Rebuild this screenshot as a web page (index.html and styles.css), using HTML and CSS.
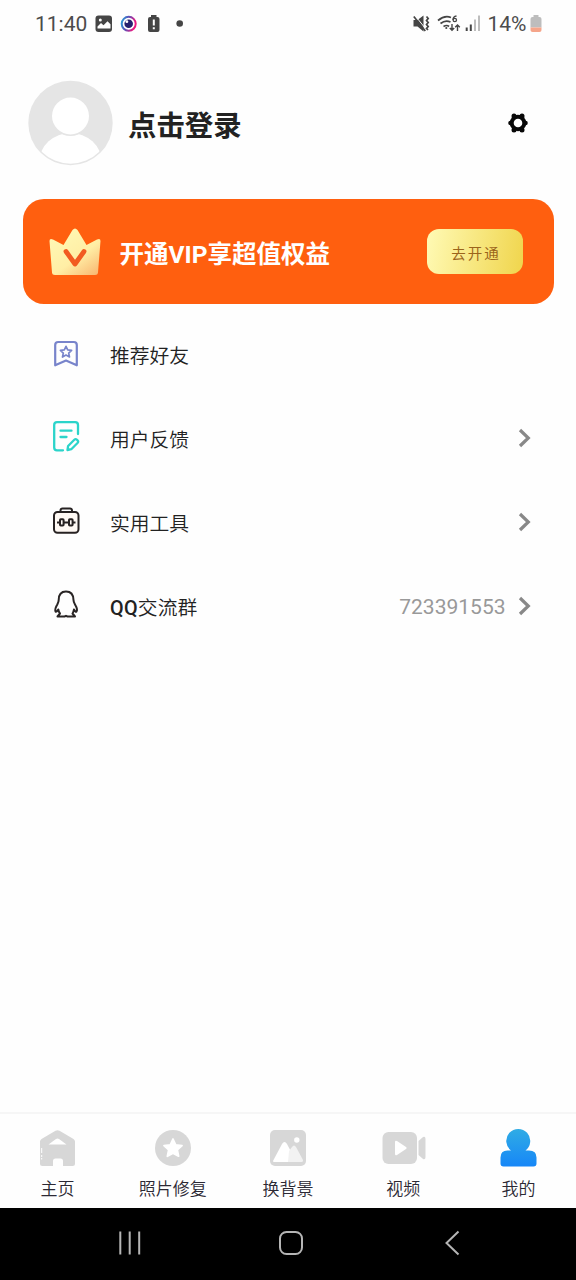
FILE: index.html
```html
<!DOCTYPE html>
<html lang="zh-CN">
<head>
<meta charset="utf-8">
<title>我的</title>
<link rel="stylesheet" href="styles.css">
</head>
<body>
<div class="screen">
  <header class="status">
    <span class="clock">11:40</span>
    <svg class="status-left" width="96" height="24" viewBox="92 12 96 24">
      <rect x="95.5" y="15.500" width="16.500" height="16.500" rx="3" fill="#454545"/>
      <path d="M97.500 28.500v-2l3.500-3.500 2.500 2.300 4-4 3 3v4.200z" fill="#fff"/>
      <circle cx="100.300" cy="20" r="1.500" fill="#fff"/>
      <defs><linearGradient id="eye" x1="0" y1="0" x2="1" y2="0.300"><stop offset="0" stop-color="#24a5dc"/><stop offset=".45" stop-color="#5951b8"/><stop offset="1" stop-color="#ed1880"/></linearGradient></defs>
      <circle cx="128.700" cy="23.800" r="7" fill="#fff" stroke="url(#eye)" stroke-width="2"/>
      <circle cx="128.700" cy="23.800" r="4.300" fill="#26206f"/>
      <circle cx="126.900" cy="21.700" r="1.400" fill="#fff"/>
      <path d="M151 15h5.500v2h1q2 0 2 2v11q0 2-2 2h-7.500q-2 0-2-2v-11q0-2 2-2h1z" fill="#454545"/>
      <path d="M153.800 19.500v6M153.800 27.300v2" stroke="#fff" stroke-width="2"/>
      <circle cx="179.700" cy="23.500" r="3.300" fill="#454545"/>
    </svg>
    <svg class="status-right" width="72" height="24" viewBox="411 12 72 24">
      <path d="M413.500 20h4l6-4.500v16l-6-5h-4z" fill="#454545"/>
      <path d="M415 15.500l12 15" stroke="#fff" stroke-width="1"/>
      <path d="M413.800 16.500l11.500 14.500M426.500 16.500l1.700 2-1.700 2 1.700 2-1.700 2 1.700 2-1.700 2 1.500 1.500" fill="none" stroke="#454545" stroke-width="1.700"/>
      <path d="M438 20.500q6.500-5.500 13-3M440.500 23.500q5-4 10-1.500M443.500 26.500q3.300-2 5.500 0" fill="none" stroke="#454545" stroke-width="1.700"/>
      <circle cx="446.300" cy="28" r="1.100" fill="#454545"/>
      <path d="M456.500 16q-3.500.5-3.500 4" fill="none" stroke="#454545" stroke-width="1.300"/>
      <circle cx="454.800" cy="20" r="1.700" fill="none" stroke="#454545" stroke-width="1.300"/>
      <path d="M452 24v6M449.800 28l2.200 2.300 2.200-2.300M457.500 31v-6M455.200 27.200l2.300-2.300 2.300 2.300" fill="none" stroke="#454545" stroke-width="1.400"/>
      <path d="M466.700 27.500v3.500M470.800 24.500v6.500" stroke="#454545" stroke-width="2"/>
      <path d="M475 19.500v11.500M479 15.500v15.500" stroke="#bdbdbd" stroke-width="2"/>
    </svg>
    <span class="percent">14%</span>
    <svg class="battery" width="12" height="18" viewBox="0 0 12 18">
      <path d="M3.500 0h5v2h1q2 0 2 2v8.500H.5V4q0-2 2-2h1z" fill="#bdbdbd"/>
      <path d="M.5 12.500h11V15q0 2-2 2h-7q-2 0-2-2z" fill="#f5a58a"/>
    </svg>
  </header>

  <section class="profile">
    <svg class="avatar" width="86" height="86" viewBox="0 0 86 86">
      <defs><clipPath id="face"><circle cx="43.500" cy="43" r="40.700"/></clipPath></defs>
      <circle cx="43.500" cy="43" r="42.200" fill="#e5e5e5"/>
      <g clip-path="url(#face)" fill="#fff">
        <ellipse cx="43.500" cy="81.500" rx="31" ry="28.500"/>
        <circle cx="43.500" cy="36" r="20" fill="#e5e5e5"/>
        <circle cx="43.500" cy="36" r="18.500"/>
      </g>
    </svg>
    <h1 class="login">点击登录</h1>
    <svg class="gear" width="22" height="22" viewBox="0 0 22 22">
      <g fill="#080808"><circle cx="11" cy="11" r="8.300"/><circle cx="7" cy="4" r="2.500"/><circle cx="15" cy="4" r="2.500"/><circle cx="18.500" cy="11" r="2.300"/><circle cx="15" cy="18" r="2.500"/><circle cx="7" cy="18" r="2.500"/><circle cx="3.500" cy="11" r="2.300"/></g>
      <circle cx="11" cy="11" r="4.300" fill="#fff"/>
    </svg>
  </section>

  <section class="vip">
    <svg class="crown" width="52" height="48" viewBox="0 0 52 48">
      <defs><linearGradient id="gold" x1=".2" y1="0" x2="1" y2="1"><stop offset="0" stop-color="#fff9b5"/><stop offset=".55" stop-color="#ffeea5"/><stop offset="1" stop-color="#f8b36e"/></linearGradient></defs>
      <path d="M4 11.500L14.500 17 23.500 2Q26 -1 28.500 2L37.500 17 48 11.500Q51.500 10 51.500 13L49 44.500Q48.800 47 46 47H6Q3.200 47 3 44.500L.5 13Q.5 10 4 11.500Z" fill="url(#gold)"/>
      <path d="M17 23.500l9 12.500 9-12.500" fill="none" stroke="#f25a20" stroke-width="4.800" stroke-linecap="round" stroke-linejoin="round"/>
    </svg>
    <span class="vip-title">开通VIP享超值权益</span>
    <span class="vip-button">去开通</span>
  </section>

  <main class="menu">
    <div class="item">
      <svg class="icon" width="32" height="36" viewBox="50 336 32 36" fill="none" stroke="#7884cb" stroke-linejoin="round">
        <path d="M55.200 365.300V345q0-3 3-3h15.600q3 0 3 3v20.300L66 360.500z" stroke-width="2.200"/>
        <path d="M66 346.300l1.700 3.600 3.900.5-2.900 2.700.8 3.900-3.500-1.900-3.500 1.900.8-3.900-2.900-2.700 3.900-.5z" stroke-width="1.700"/>
      </svg>
      <span class="label">推荐好友</span>
    </div>
    <div class="item">
      <svg class="icon" width="32" height="36" viewBox="50 420 32 36" fill="none" stroke="#2bd4ca" stroke-width="2.300" stroke-linecap="round" stroke-linejoin="round">
        <path d="M78 434V425q0-2.800-2.800-2.800H57q-2.800 0-2.800 2.800v22.500q0 2.800 2.800 2.800h6M60.500 430.700h11M60.500 437h6"/>
        <path d="M67.500 450l.6-4 6.200-6.200q1.300-1.300 2.700 0l.5.500q1.300 1.300 0 2.700l-6.200 6.200z"/>
      </svg>
      <span class="label">用户反馈</span>
      <svg class="chevron" width="14" height="20" viewBox="0 0 14 20"><path d="M2 2l8.300 8L2 18"/></svg>
    </div>
    <div class="item">
      <svg class="icon" width="32" height="36" viewBox="50 504 32 36" fill="none" stroke="#272222" stroke-width="2">
        <rect x="54" y="512" width="24.500" height="20.800" rx="3.500" fill="#fff9f4"/>
        <path d="M60.500 512v-1.500q0-2 2-2h7.500q2 0 2 2v1.500M57 522.500h3M64 522.500h5M73 522.500h2.500"/>
        <rect x="60" y="519.300" width="3.600" height="6.200" rx=".8"/><rect x="69" y="519.300" width="3.600" height="6.200" rx=".8"/>
      </svg>
      <span class="label">实用工具</span>
      <svg class="chevron" width="14" height="20" viewBox="0 0 14 20"><path d="M2 2l8.300 8L2 18"/></svg>
    </div>
    <div class="item">
      <svg class="icon" width="32" height="36" viewBox="50 588 32 36" fill="none" stroke="#292525" stroke-width="2" stroke-linejoin="round">
        <path d="M58.700 600Q58.700 591.500 66 591.500T73.500 600Q73.500 602 75 604.500 78 609.500 76.500 611.500 75.500 612.500 74 609.500 73.300 612.500 72.500 613.500L75 616.500H67.500L66 615.800 64.500 616.500H57.500L60 613.500Q58.700 612 58.300 609.500 56.500 612.500 55.500 611.500 54.500 609 57.300 604.500 58.700 602 58.700 600Z"/>
      </svg>
      <span class="label"><span class="latin">QQ</span>交流群</span>
      <span class="group">723391553</span>
      <svg class="chevron" width="14" height="20" viewBox="0 0 14 20"><path d="M2 2l8.300 8L2 18"/></svg>
    </div>
  </main>

  <nav class="tabs">
    <div class="tab">
      <svg width="48" height="42" viewBox="0 0 48 42">
        <path d="M6 14.500Q6 13 7.500 12L21.500 3.800q2-1.200 4 0L39.500 12q1.500 1 1.500 2.500v22q0 2.500-2.500 2.500H29v-5q0-2.500-2.500-2.500h-5q-2.500 0-2.500 2.500v5H8.500q-2.500 0-2.500-2.500z" fill="#d7d7d7"/>
        <path d="M14.500 17.500l7.500-5.500q1.500-1 3 0l7.500 5.500z" fill="#fff"/>
        <path d="M7.700 21v5m0 2v2m0 1v1.500" stroke="#fff" stroke-width="1"/>
      </svg>
      <span>主页</span>
    </div>
    <div class="tab">
      <svg width="48" height="42" viewBox="0 0 48 42">
        <circle cx="24" cy="21" r="18" fill="#d7d7d7"/>
        <path d="M24 12l2.700 5.900 6.300.7-4.700 4.300 1.300 6.300-5.600-3.100-5.600 3.100 1.300-6.300-4.700-4.300 6.300-.7z" fill="#fff" stroke="#fff" stroke-width="1.800" stroke-linejoin="round"/>
      </svg>
      <span>照片修复</span>
    </div>
    <div class="tab">
      <svg width="48" height="42" viewBox="0 0 48 42">
        <rect x="6" y="3" width="36" height="36" rx="5" fill="#d7d7d7"/>
        <path d="M9 34l9-17q2.500-4 5 0l9 17q0 1-1 1H10q-1 0-1-1z" fill="#fff"/>
        <path d="M24 35l1-11 3-4q2-3 4 0l7 13q.5 2-1.500 2z" fill="#f2f2f2"/>
        <circle cx="32.800" cy="13" r="2.700" fill="#fff"/>
      </svg>
      <span>换背景</span>
    </div>
    <div class="tab">
      <svg width="48" height="42" viewBox="0 0 48 42">
        <rect x="3.500" y="5" width="34.500" height="32" rx="6" fill="#d7d7d7"/>
        <path d="M16 15q0-2 2-1l9 6q1.500 1 0 2l-9 6q-2 1-2-1z" fill="#fff"/>
        <path d="M39.500 14l4.500-4q2.500-1 2.500 2v18q0 3-2.500 2l-4.500-4z" fill="#d7d7d7"/>
      </svg>
      <span>视频</span>
    </div>
    <div class="tab">
      <svg width="48" height="42" viewBox="0 0 48 42">
        <defs><linearGradient id="me" gradientUnits="userSpaceOnUse" x1="24" y1="1" x2="24" y2="39"><stop offset="0" stop-color="#30ade4"/><stop offset="1" stop-color="#1787f7"/></linearGradient></defs>
        <path d="M17 23.500A12 12 0 1 1 31.500 23.500H35q7.500 0 7.500 7v6q0 3-3 3h-30Q6.500 39.500 6.500 36.500v-6q0-7 7-7z" fill="url(#me)"/>
      </svg>
      <span>我的</span>
    </div>
  </nav>

  <footer class="system">
    <svg width="26" height="26" viewBox="0 0 26 26"><path d="M3.300 1.500v23M12.700 1.500v23M22.200 1.500v23"/></svg>
    <svg width="26" height="26" viewBox="0 0 26 26"><rect x="1" y="2" width="22" height="22" rx="6.500"/></svg>
    <svg width="26" height="26" viewBox="0 0 26 26"><path d="M18.500 1.500L6.500 13l12 11.500"/></svg>
  </footer>
</div>
</body>
</html>
```
FILE: styles.css
```css
* { box-sizing: border-box; }
body { margin: 0; background: #fff; font-family: Roboto, "Noto Sans CJK SC", sans-serif; color: #222; }
svg { display: block; flex: none; }
.screen { width: 576px; height: 1280px; display: flex; flex-direction: column; background: #fefefe; }
.status { height: 48px; display: flex; align-items: center; padding: 0 34.500px 0 35px; font-size: 21px; line-height: 24px; color: #4c4c4c; }
.clock { width: 57px; }
.percent { width: 42px; margin-left: 5px; }
.status-right { margin-left: auto; }
.battery { margin-top: 0; }
.profile { height: 151px; display: flex; align-items: center; padding: 0 47.500px 2px 27px; }
.login { flex: 1; margin: 9px 0 0 15px; font-size: 28.400px; line-height: 40px; font-weight: 700; color: #222; }
.vip { height: 105px; margin: 0 22.500px; padding: 0 30.500px 0 26.500px; display: flex; align-items: center; background: #ff5f0f; border-radius: 21px; }
.vip-title { margin: 6px 0 0 18.500px; flex: 1; font: 700 24.500px/36px Roboto, "Noto Sans CJK SC", sans-serif; color: #fff; white-space: nowrap; }
.vip-button { width: 96px; height: 45px; border-radius: 12px; background: linear-gradient(100deg, #fffab5, #f0d54c); color: #9b641b; font-size: 14.500px; line-height: 51px; letter-spacing: 2px; text-align: center; padding-left: 2px; }
.menu { flex: 1; padding-top: 9px; }
.item { height: 84px; display: flex; align-items: center; padding: 0 44.500px 0 50px; }
.label { flex: 1; margin: 4px 0 0 28px; font-size: 19.800px; line-height: 30px; font-weight: 350; }
.latin { font-weight: 500; letter-spacing: .3px; }
.icon { margin-top: -3px; }
.group { font-size: 21px; color: #999; margin: -1px 12px 0 0; }
.chevron { fill: none; stroke: #888; stroke-width: 3.200; margin-top: -2px; }
.tabs { height: 96px; border-top: 2px solid #f6f6f6; display: grid; grid-template-columns: repeat(5, 1fr); }
.tab { display: flex; flex-direction: column; align-items: center; padding-top: 13px; font-size: 17px; line-height: 24px; color: #2c2934; font-weight: 350; }
.tab span { margin-top: 8px; }
.system { height: 72px; background: #000; display: flex; justify-content: space-between; align-items: center; padding: 0 110px 2px 117px; }
.system svg { fill: none; stroke: #b5b5b5; stroke-width: 2; }
```
